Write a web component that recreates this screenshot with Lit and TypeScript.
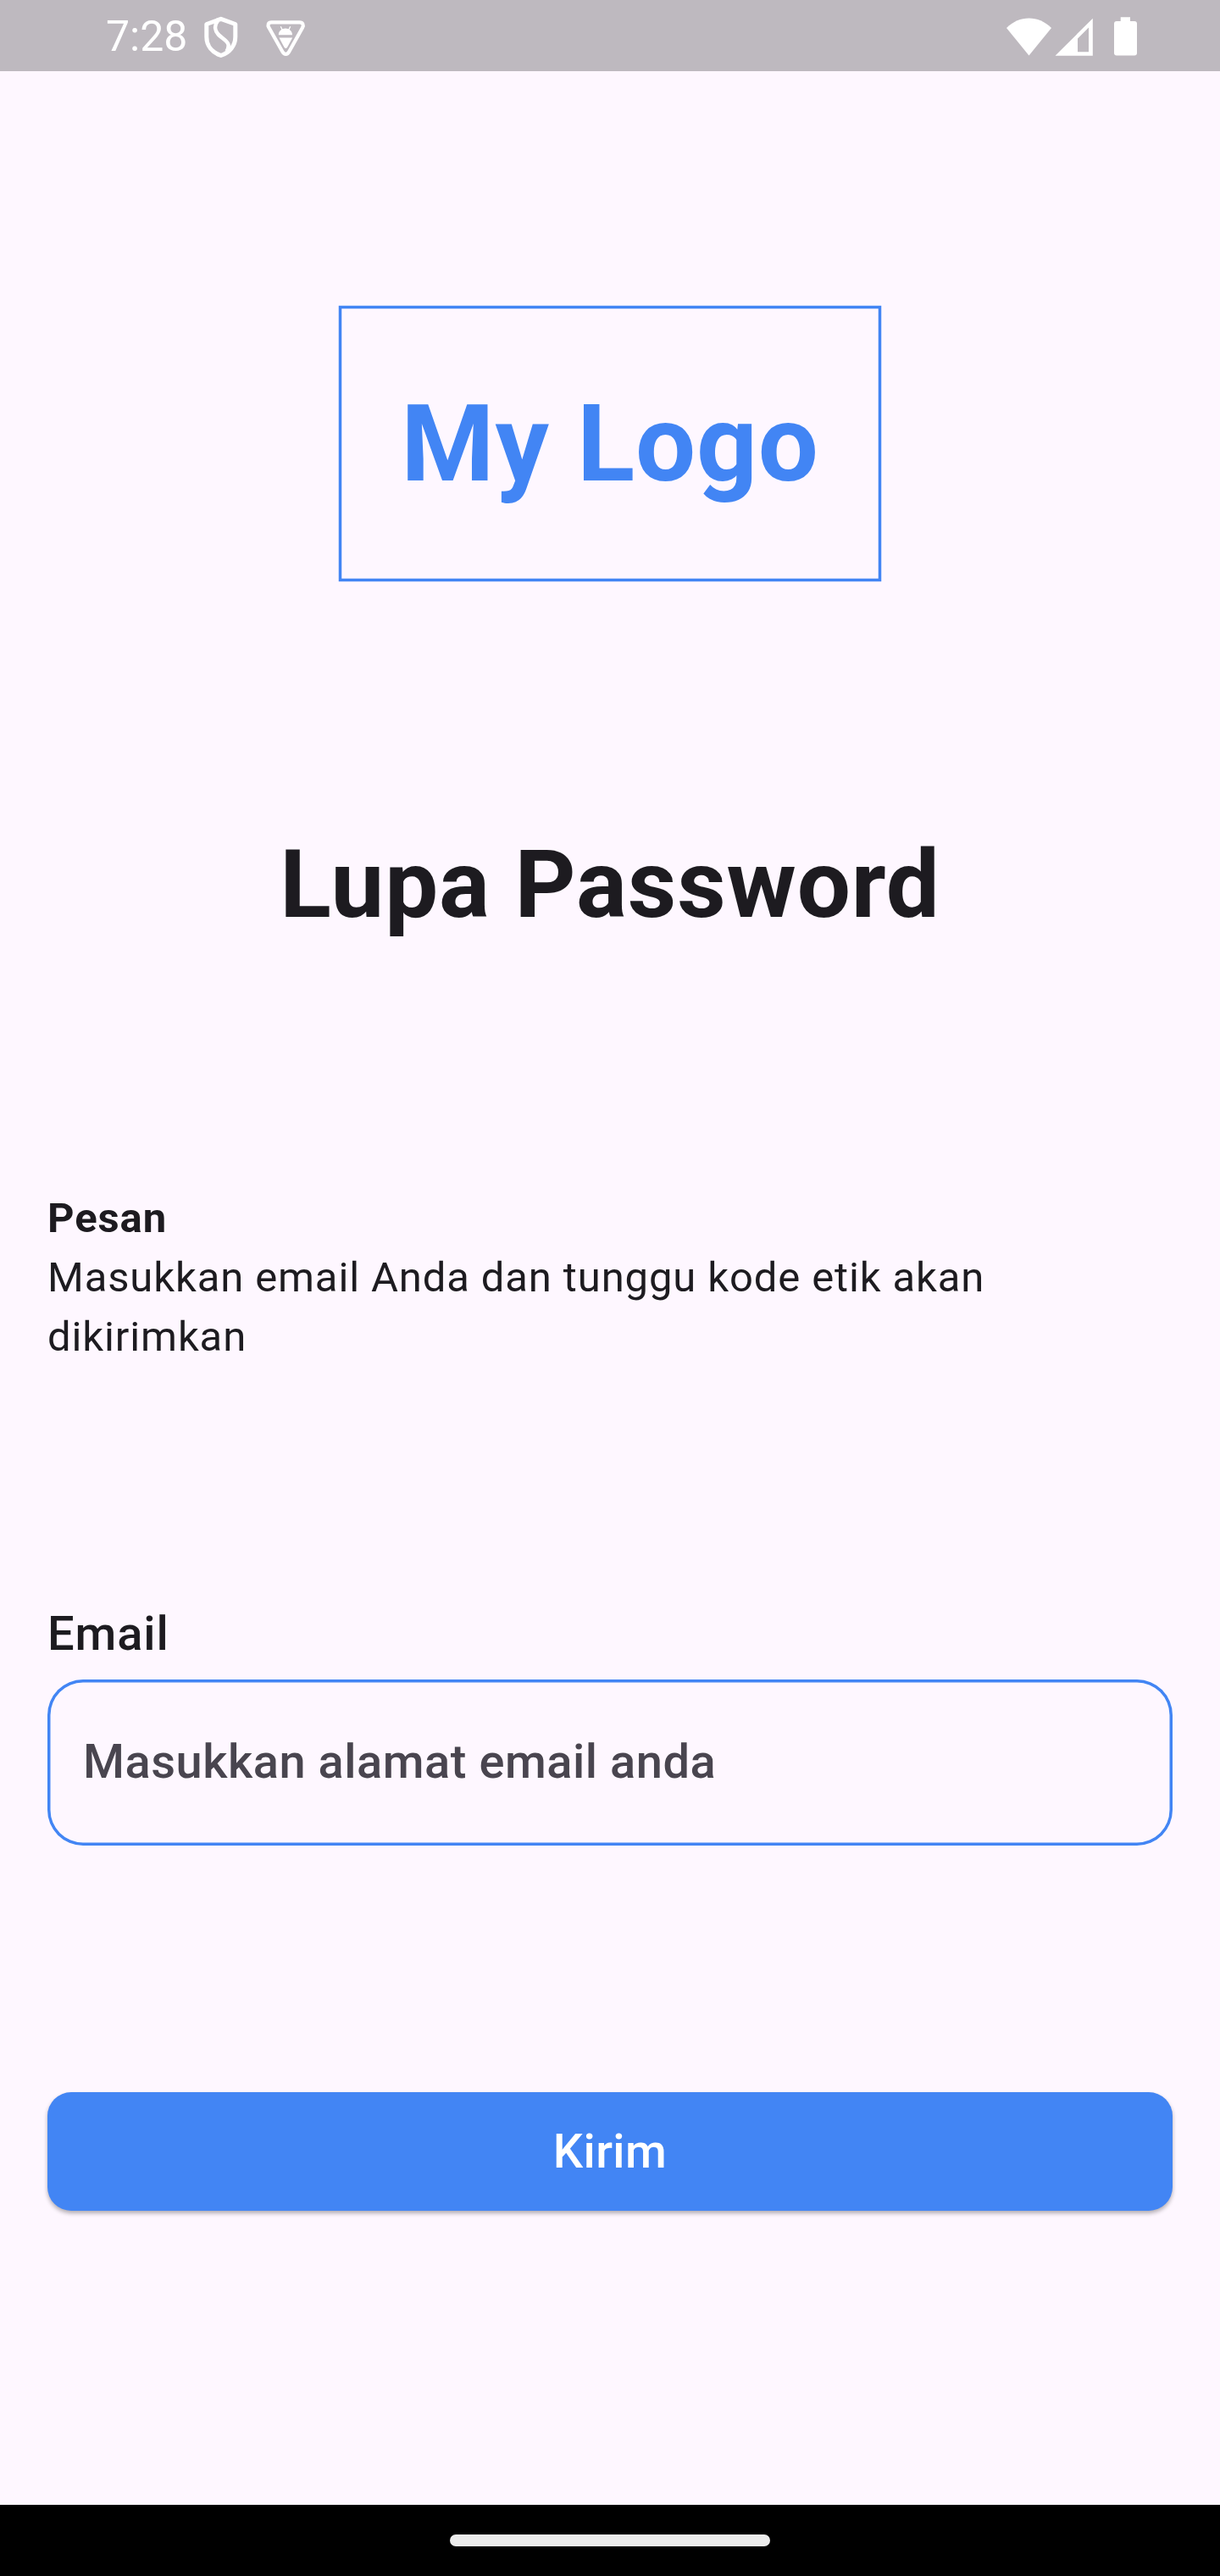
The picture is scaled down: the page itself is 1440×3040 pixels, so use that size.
import { LitElement, html, css } from "lit";
import { customElement } from "lit/decorators.js";

@customElement("status-bar")
class StatusBar extends LitElement {
  static styles = css`
    :host {
      display: flex;
      justify-content: space-between;
      height: 84px;
      box-sizing: border-box;
      background: #beb9bf;
      color: #fff;
      font-family: Roboto, sans-serif;
      letter-spacing: 0;
    }
    .side {
      display: flex;
      align-items: flex-start;
    }
    .left {
      padding-left: 125px;
    }
    .time {
      width: 113px;
      font-size: 50px;
      line-height: 86px;
      white-space: nowrap;
    }
    svg {
      display: block;
    }
  `;

  render() {
    return html`
      <div class="side left">
        <span class="time">7:28</span>
        <svg width="126" height="84" viewBox="238 0 126 84" fill="none" stroke="#fff">
          <path
            d="M260.8 22.3 L277.8 28.5 V43.5 C277.8 54 271 62 260.8 65.5 C250.500 62 243.800 54 243.800 43.500 V28.500 Z"
            stroke-width="5"
            stroke-linejoin="round"
          />
          <path
            d="M257 24.500 C252.500 30 253.500 36.500 258.500 41.500 C263 45.500 268.500 48.500 269.500 52.500 C270 55 269.500 57.500 267.500 60.500"
            stroke-width="4.600"
          />
          <path
            d="M320.500 26.300 H353.500 C357.500 26.300 358.800 29.500 357 32.800 L341.200 61 C339.200 64.800 335.500 64.800 333.400 61 L317.500 32.800 C315.500 29.500 316.500 26.300 320.500 26.300 Z"
            stroke-width="4.200"
            stroke-linejoin="round"
          />
          <path
            d="M328.800 41.300 C328.800 36.800 332.500 33.600 336.900 33.600 C341.300 33.600 345 36.800 345 41.300 Z M329.500 44.600 H345.200 L339.300 55.500 Q337.300 58.700 335.300 55.500 Z"
            fill="#fff"
            stroke="none"
          />
          <path d="M331.300 31.300 L333.300 35.500 M342.700 31.300 L340.700 35.500" stroke-width="1.300" />
        </svg>
      </div>
      <div class="side">
        <svg width="260" height="84" viewBox="1180 0 260 84" fill="#fff">
          <path d="M1214.500 65.500 L1188 33 C1203.500 17.700 1225.500 17.700 1241 33 Z" />
          <path
            fill-rule="evenodd"
            d="M1289.800 21.700 V65.700 H1245.500 Z M1285 32.500 L1272 45.500 V61.300 H1285 Z"
          />
          <path
            d="M1322.700 20.300 H1334 V25 H1339 Q1342 25 1342 28 V62.500 Q1342 65.500 1339 65.500 H1318 Q1315 65.500 1315 62.500 V28 Q1315 25 1318 25 H1322.700 Z"
          />
        </svg>
      </div>
    `;
  }
}

@customElement("app-root")
class AppRoot extends LitElement {
  static styles = css`
    :host {
      display: flex;
      flex-direction: column;
      height: 3040px;
      background: #fef7ff;
      color: #1d1b20;
      font-family: Roboto, sans-serif;
      letter-spacing: 0.875px;
    }
    main {
      flex: 1;
      display: flex;
      flex-direction: column;
      padding: 277px 56px 0;
    }
    .logo {
      align-self: center;
      box-sizing: border-box;
      width: 640px;
      height: 325px;
      padding-top: 73px;
      box-shadow: inset 0 0 0 3.25px #4285f4, 0 0 0 0.25px #4285f4;
      color: #4285f4;
      font-size: 126px;
      font-weight: 700;
      line-height: 180px;
      text-align: center;
      white-space: nowrap;
    }
    h1 {
      margin: 278px 0 0;
      text-align: center;
      font-size: 112px;
      font-weight: 700;
      line-height: 160px;
    }
    .message {
      margin-top: 279px;
      font-size: 49px;
      line-height: 70px;
    }
    .message strong {
      display: block;
      font-weight: 700;
    }
    .message p {
      margin: 0;
    }
    .label {
      margin-top: 275px;
      font-size: 56px;
      font-weight: 500;
      line-height: 80px;
    }
    .field {
      display: flex;
      align-items: center;
      box-sizing: border-box;
      height: 196px;
      margin-top: 14px;
      padding: 0 42px 2px;
      border-radius: 42px;
      box-shadow: inset 0 0 0 3.5px #4285f4;
      color: #49454f;
      font-size: 56px;
      font-weight: 500;
      line-height: 80px;
      letter-spacing: 0.525px;
    }
    .submit {
      height: 140px;
      margin-top: 291px;
      padding: 0;
      border: 0;
      border-radius: 28px;
      background: #4285f4;
      box-shadow: 0 3px 5px rgba(0, 0, 0, 0.3);
      color: #fff;
      font: 500 56px / 140px Roboto, sans-serif;
      letter-spacing: 0.35px;
    }
    .nav {
      display: flex;
      justify-content: center;
      align-items: center;
      height: 84px;
      background: #000;
    }
    .handle {
      width: 378px;
      height: 14px;
      border-radius: 7px;
      background: #ebebeb;
    }
  `;

  render() {
    return html`
      <status-bar></status-bar>
      <main>
        <div class="logo">My Logo</div>
        <h1>Lupa Password</h1>
        <div class="message">
          <strong>Pesan</strong>
          <p>Masukkan email Anda dan tunggu kode etik akan dikirimkan</p>
        </div>
        <div class="label">Email</div>
        <div class="field">Masukkan alamat email anda</div>
        <button class="submit">Kirim</button>
      </main>
      <div class="nav"><div class="handle"></div></div>
    `;
  }
}
